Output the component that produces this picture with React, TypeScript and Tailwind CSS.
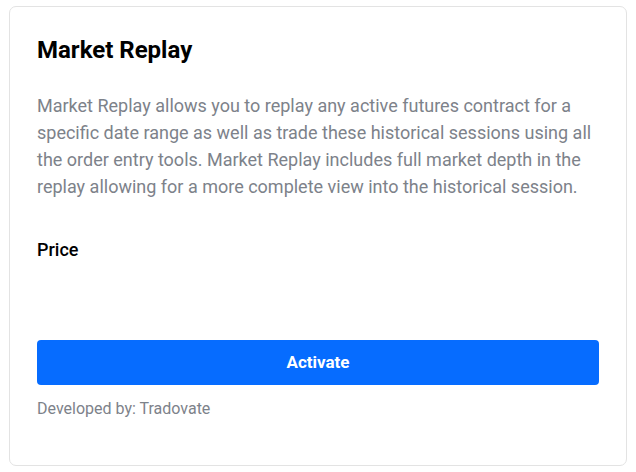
import React from "react";

export default function App() {
  return (
    <div className="w-[636px] h-[472px] bg-white pt-[6px] pl-[9px] font-['Roboto',sans-serif]">
      <div className="w-[618px] h-[460px] rounded-[7px] border border-[#e3e3e3] bg-white px-[27px] pt-[26px] flex flex-col">
        <h1 className="text-[24px] leading-[34px] font-bold text-black">Market Replay</h1>
        <p className="mt-[25px] text-[18px] leading-[27px] text-[#7d828a]">
          Market Replay allows you to replay any active futures contract for a
          specific date range as well as trade these historical sessions using all
          the order entry tools. Market Replay includes full market depth in the
          replay allowing for a more complete view into the historical session.
        </p>
        <div className="mt-[38px] text-[18px] leading-[24px] font-medium text-black">Price</div>
        <button className="mt-[78px] h-[45px] w-full rounded-[4px] bg-[#066cff] text-white text-[17px] font-bold">
          Activate
        </button>
        <div className="mt-[13px] text-[16px] leading-[22px] text-[#7d828a]">Developed by: Tradovate</div>
      </div>
    </div>
  );
}
